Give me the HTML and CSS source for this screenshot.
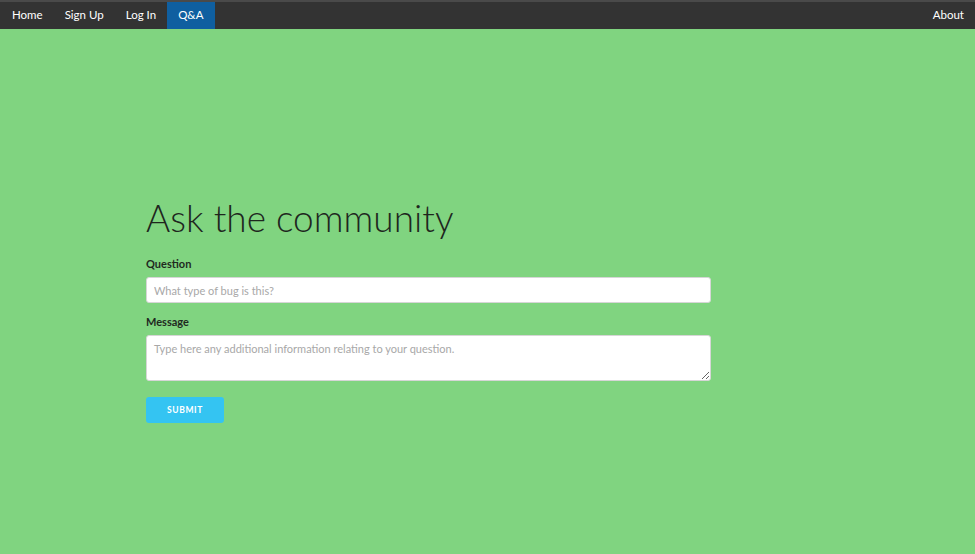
FILE: index.html
```html
<!DOCTYPE html>
<html>
<head>
<meta charset="utf-8">
<link rel="stylesheet" href="styles.css">
</head>
<body>
<nav class="navbar">
  <ul class="nav">
    <li><a href="#">Home</a></li>
    <li><a href="#">Sign Up</a></li>
    <li><a href="#">Log In</a></li>
    <li class="active"><a href="#">Q&amp;A</a></li>
  </ul>
  <ul class="nav">
    <li><a href="#">About</a></li>
  </ul>
</nav>
<main class="content">
  <h1 class="title">Ask the community</h1>
  <form class="ask-form">
    <label class="field-label" for="q">Question</label>
    <input id="q" class="field-input" type="text" placeholder="What type of bug is this?">
    <label class="field-label msg-label" for="m">Message</label>
    <textarea id="m" class="field-text" placeholder="Type here any additional information relating to your question."></textarea>
    <button type="button" class="submit-btn">SUBMIT</button>
  </form>
</main>
</body>
</html>
```
FILE: styles.css
```css
html, body {
  margin: 0;
  padding: 0;
  height: 100%;
}
body {
  background: #80d480;
  font-family: "Lato", "Open Sans", sans-serif;
  color: #222;
}
.navbar {
  display: flex;
  justify-content: space-between;
  background: #333333;
  border-top: 2px solid #4a4a4a;
  height: 27px;
}
.nav {
  display: flex;
  list-style: none;
  margin: 0;
  padding: 0;
}
.nav li a {
  display: block;
  height: 26px;
  line-height: 26px;
  padding: 0 11px;
  color: #ffffff;
  text-decoration: none;
  font-size: 11.5px;
}
.nav li:first-child a {
  padding-left: 12px;
}
.nav li.active a {
  height: 27px;
  background: #0f5fa0;
}
.content {
  padding: 167px 0 0 146px;
  width: 565px;
}
.title {
  margin: 0 0 16px;
  font-size: 37px;
  font-weight: 300;
  color: #1e261e;
  line-height: 44px;
}
.ask-form {
  display: flex;
  flex-direction: column;
  align-items: flex-start;
}
.field-label {
  font-size: 11px;
  font-weight: 700;
  color: #1f2a1f;
  margin-bottom: 6px;
  line-height: 15px;
}
.msg-label {
  margin-top: 11px;
}
.field-input, .field-text {
  box-sizing: border-box;
  width: 565px;
  border: 1px solid #d6d6d6;
  border-radius: 3px;
  background: #fff;
  font-family: inherit;
  font-size: 11px;
  padding: 0 7px;
  color: #333;
}
.field-input {
  height: 26px;
}
.field-text {
  height: 46px;
  padding-top: 6px;
  resize: vertical;
}
.field-input::placeholder, .field-text::placeholder {
  color: #a8a8a8;
}
.submit-btn {
  margin-top: 16px;
  width: 78px;
  height: 26px;
  background: #34c4f2;
  border: none;
  border-radius: 3px;
  color: #fff;
  font-family: inherit;
  font-size: 8.5px;
  font-weight: 700;
  letter-spacing: 0.6px;
  padding: 0;
}
```
